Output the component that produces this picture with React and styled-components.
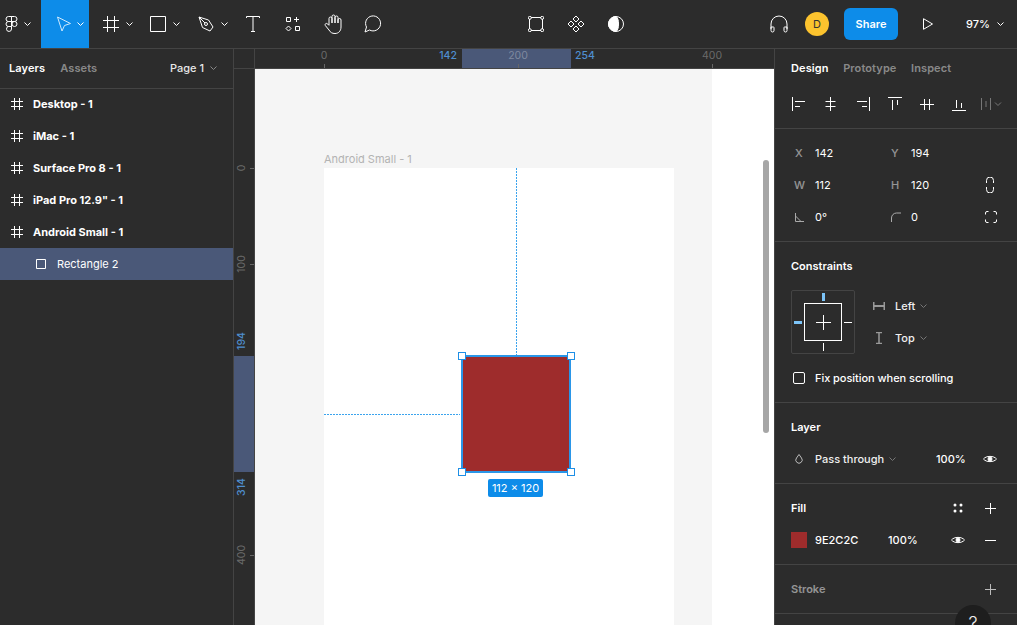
import React from "react";
import styled, { createGlobalStyle } from "styled-components";

const Global = createGlobalStyle`
  html, body { margin: 0; padding: 0; height: 100%; background: #2c2c2c; overflow: hidden; }
  #root { height: 100%; }
  * { box-sizing: border-box; }
`;
const App_ = styled.div`
  width: 1017px; height: 625px; display: grid; grid-template-rows: 49px 1fr;
  font-family: Inter, "Liberation Sans", sans-serif; font-size: 11px; color: #fff;
  background: #2c2c2c; overflow: hidden;
`;
const TopBar = styled.header`display: flex; align-items: stretch; height: 49px; border-bottom: 1px solid #444; background: #2c2c2c;`;
const Tool = styled.div`
  display: flex; align-items: center; justify-content: center; width: ${p => p.$w}px; margin-left: ${p => p.$ml || 0}px;
`;
const MenuTool = styled.div`
  display: flex; align-items: center; gap: ${p => p.$gap ?? 7}px; width: ${p => p.$w}px; padding-left: ${p => p.$pl}px;
  background: ${p => p.$active ? "#0d8ce9" : "transparent"};
`;
const Share = styled.div`
  width: 54px; height: 32px; margin: 8px 0 0 15px; background: #0d8ce9; border-radius: 6px;
  display: flex; align-items: center; justify-content: center; font-weight: 600;
`;
const Avatar = styled.div`
  width: 24px; height: 24px; margin: 12px 0 0 6px; border-radius: 50%; background: #fcc32e; color: #333;
  display: flex; align-items: center; justify-content: center; font-size: 11px;
`;
const Zoom = styled.div`display: flex; align-items: center; gap: 7px; margin-left: 24px; font-weight: 500;`;
const Main = styled.div`display: grid; grid-template-columns: 234px 540px 243px; min-height: 0;`;
const Left = styled.aside`border-right: 1px solid #444; min-height: 0;`;
const LeftTabs = styled.div`
  display: flex; align-items: center; gap: 15px; height: 40px; margin-bottom: -1px; padding: 0 16px 1px 9px; border-bottom: 1px solid #444;
`;
const RightTabs = styled.div`display: flex; align-items: center; gap: 14.5px; height: 39px; padding: 0 16px 1px;`;
const Tab = styled.span`font-weight: 600; color: ${p => p.$on ? "#fff" : "rgba(255,255,255,.45)"}; letter-spacing: .01em;`;
const Page = styled.span`margin-left: auto; display: flex; align-items: center; gap: 6px; font-weight: 500; color: #e8e8e8;`;
const Layer = styled.div`
  display: flex; align-items: center; height: 32px; padding-left: ${p => p.$child ? 35 : 11}px; gap: 10px;
  font-weight: ${p => p.$child ? 400 : 700}; background: ${p => p.$sel ? "#4a5878" : "transparent"};
`;
const Stage = styled.div`display: grid; grid-template-columns: 21px 1fr; grid-template-rows: 20px 1fr; min-height: 0; min-width: 0;`;
const Corner = styled.div`border-right: 1px solid #444; border-bottom: 1px solid #444;`;
const HRuler = styled.div`position: relative; border-bottom: 1px solid #444; overflow: hidden;`;
const VRuler = styled.div`position: relative; border-right: 1px solid #444; overflow: hidden;`;
const HBand = styled.div`position: absolute; left: 207px; top: 0; width: 109px; height: 19px; background: #4a5878;`;
const VBand = styled.div`position: absolute; top: 287px; left: 0; width: 20px; height: 116px; background: #4a5878;`;
const HMark = styled.span`
  position: absolute; top: 0; left: ${p => p.$x}px; transform: translateX(-50%); font-size: 10.5px;
  font-weight: ${p => p.$blue ? 500 : 400}; color: ${p => p.$blue ? "#4f8fd0" : "rgba(255,255,255,.3)"};
`;
const HTick = styled.i`position: absolute; left: ${p => p.$x}px; bottom: 0; width: 1px; height: 4px; background: #666;`;
const VMark = styled.span`
  position: absolute; left: 7px; top: ${p => p.$y}px; transform: translate(-50%,-50%) rotate(-90deg); font-size: 10.5px;
  font-weight: ${p => p.$blue ? 500 : 400}; color: ${p => p.$blue ? "#4f8fd0" : "rgba(255,255,255,.3)"};
`;
const VTick = styled.i`position: absolute; top: ${p => p.$y}px; right: 0; height: 1px; width: 4px; background: #666;`;
const Canvas = styled.div`position: relative; background: linear-gradient(90deg, #f5f5f5 457px, #fff 457px); overflow: hidden;`;
const FrameLabel = styled.div`position: absolute; left: 69px; top: 83px; color: #b3b3b3;`;
const Frame = styled.div`position: absolute; left: 69px; top: 99px; width: 350px; height: 470px; background: #fff;`;
const VGuide = styled.div`
  position: absolute; left: 192px; top: 0; width: 1px; height: 187px;
  background: repeating-linear-gradient(180deg, #3ba4ee 0 2px, transparent 2px 3px);
`;
const HGuide = styled.div`
  position: absolute; left: 0; top: 246px; width: 136px; height: 1px;
  background: repeating-linear-gradient(90deg, #3ba4ee 0 2px, transparent 2px 3px);
`;
const Rect = styled.div`position: absolute; left: 137px; top: 187px; width: 110px; height: 118px; background: #9e2c2c; border: 2px solid #2a96e8;`;
const Handle = styled.i`
  position: absolute; width: 8px; height: 8px; background: #fff; border: 1px solid #1e8fe6;
  ${p => p.$t ? "top: -5px;" : "bottom: -5px;"} ${p => p.$l ? "left: -5px;" : "right: -6px;"}
`;
const Badge = styled.div`
  position: absolute; left: 233px; top: 410px; width: 55px; height: 18px; background: #0d8ce9; border-radius: 2px;
  display: flex; align-items: center; justify-content: center; color: #fff; font-size: 11px;
`;
const Scroll = styled.div`position: absolute; left: 508px; top: 91px; width: 6px; height: 273px; border-radius: 3px; background: #a6a6a6;`;
const Right = styled.aside`position: relative; border-left: 1px solid #444; min-height: 0; overflow: hidden;`;
const Align = styled.div`display: flex; align-items: center; height: 41px; padding: 0 0 9px 17px; gap: 18px; border-bottom: 1px solid #444;`;
const AlignMore = styled.span`margin-left: -3px;`;
const Section = styled.section`padding: 8px 0; border-bottom: 1px solid #444;`;
const Title = styled.div`
  display: flex; align-items: center; justify-content: space-between; height: 32px; padding: 0 21px 0 16px; font-weight: 600;
  color: ${p => p.$dim ? "rgba(255,255,255,.5)" : "#fff"};
`;
const Actions = styled.div`display: flex; align-items: center; gap: 22px;`;
const PropRow = styled.div`display: grid; grid-template-columns: 24px 72px 24px 72px 1fr; align-items: center; height: 32px; padding-left: 16px;`;
const PropLabel = styled.span`font-weight: 500; color: rgba(255,255,255,.5); padding-left: ${p => p.$pl ?? 4}px;`;
const End = styled.span`display: flex; justify-content: flex-end; padding-right: ${p => p.$pr}px;`;
const ConstraintBody = styled.div`display: flex; margin-top: 8px; padding-left: 16px; gap: 18px;`;
const Widget = styled.div`
  position: relative; width: 64px; height: 64px; border: 1px solid #444; border-radius: 2px;
  display: flex; align-items: center; justify-content: center;
`;
const Inner = styled.div`width: 38px; height: 38px; border: 1px solid #fff; display: flex; align-items: center; justify-content: center;`;
const Peg = styled.i`
  position: absolute; background: ${p => p.$on ? "#7cc4f8" : "#fff"};
  ${p => p.$side === "t" && `top: 2px; left: 30px; width: 3px; height: 8px;`}
  ${p => p.$side === "b" && `bottom: 2px; left: 31px; width: 1px; height: 8px;`}
  ${p => p.$side === "l" && `left: 2px; top: 30px; height: 3px; width: 8px;`}
  ${p => p.$side === "r" && `right: 2px; top: 31px; height: 1px; width: 8px;`}
`;
const ConstraintCol = styled.div`display: flex; flex-direction: column;`;
const ConstraintRow = styled.div`display: flex; align-items: center; height: 32px; gap: 10px;`;
const Select = styled.span`display: flex; align-items: center; gap: 5px; font-weight: 500; color: #f0f0f0;`;
const CheckRow = styled.div`display: flex; align-items: center; height: 32px; margin-top: 8px; padding-left: 18px; gap: 10px; font-weight: 500; letter-spacing: -.05px;`;
const Check = styled.i`width: 12px; height: 12px; border: 1px solid #fff; border-radius: 2px;`;
const LayerRow = styled.div`display: grid; grid-template-columns: 24px 121px 30px 1fr; align-items: center; height: 32px; padding-left: 16px; font-weight: 500;`;
const FillRow = styled.div`display: grid; grid-template-columns: 24px 73px 30px 1fr; align-items: center; height: 32px; padding-left: 16px; font-weight: 500;`;
const Swatch = styled.i`display: block; width: 16px; height: 16px; background: #9e2c2c;`;
const Pair = styled.span`display: flex; align-items: center; justify-content: flex-end; gap: 20px; padding-right: 21px;`;
const Help = styled.div`
  position: absolute; left: 180px; top: 556px; width: 36px; height: 36px; border-radius: 50%; background: #1e1e1e;
  display: flex; align-items: center; justify-content: center; font-size: 18px; font-weight: 300; color: #eee;
`;
const Svg = styled.svg`display: block; flex: none; fill: none; stroke: ${p => p.$c || "#fff"}; stroke-width: 1;`;

const I = ({ s = 16, w, h, c, children }) => <Svg width={w || s} height={h || s} viewBox={`0 0 ${w || s} ${h || s}`} $c={c}>{children}</Svg>;
const Chev = ({ c = "#fff" }) => <I w={7} h={4} c={c}><path d="M.5.5 3.500 3.500 6.500.5" /></I>;
const Grid = () => <I s={12}><path d="M3.500 0v12M8.500 0v12M0 3.500h12M0 8.500h12" /></I>;
const Eye = () => <I w={14} h={10}><path d="M.5 5C3 1.500 11 1.500 13.500 5 11 8.500 3 8.500.5 5Z" /><circle cx="7" cy="5" r="2" fill="#fff" /></I>;

const LAYERS = ["Desktop - 1", "iMac - 1", "Surface Pro 8 - 1", 'iPad Pro 12.9" - 1', "Android Small - 1"];
const ALIGN = [
  "M.5 0v14M3 4.500h10M3 9.500h5", "M6.500 0v14M1.500 4.500h10M1.500 9.500h10", "M13.500 0v14M1 4.500h10M6 9.500h5",
  "M0 .5h14M4.500 3v10M9.500 3v5", "M0 7.500h14M4.500 2v11M9.500 2v11", "M0 13.500h14M4.500 3v8M9.500 6v5",
];

export default function App() {
  return (
    <App_>
      <Global />
      <TopBar>
        <MenuTool $w={41} $pl={5} $gap={6}>
          <I w={13} h={16}>
            <path d="M6.500.5H3.500a2.500 2.500 0 0 0 0 5h3ZM6.500.5h3a2.500 2.500 0 0 1 0 5h-3ZM6.500 5.500h-3a2.500 2.500 0 0 0 0 5h3ZM6.500 10.500h-3a2.500 2.500 0 1 0 3 2.500Z" />
            <circle cx="9.500" cy="8" r="2.500" />
          </I>
          <Chev />
        </MenuTool>
        <MenuTool $w={48} $active $pl={15} $gap={5}>
          <I s={16} c="#cfe9fc"><path d="M1.500 1 14.500 7.500 8.500 9.500 6 15Z" /></I>
          <Chev />
        </MenuTool>
        <MenuTool $w={48} $pl={14}><I><path d="M4.500 0v16M11.500 0v16M0 4.500h16M0 11.500h16" /></I><Chev /></MenuTool>
        <MenuTool $w={48} $pl={13}><I><path d="M.5.5h15v15H.5z" /></I><Chev /></MenuTool>
        <MenuTool $w={48} $pl={13}>
          <I>
            <path d="M1 1l9.500 3 4.500 7-3 4-7.500-3.500Z M1 1l6 6" />
            <circle cx="8" cy="8" r="1.500" />
          </I>
          <Chev />
        </MenuTool>
        <Tool $w={40}><I w={14} h={16}><path d="M.5 2V.5h13V2M7 .5v15M5 15.500h4" /></I></Tool>
        <Tool $w={40}>
          <I><path d="M1.500 1.500h4v4h-4zM11.500 1v5M9 3.500h5M10.500 10.500h4v4h-4zM3.500 10l2.500 2.500L3.500 15 1 12.500Z" /></I>
        </Tool>
        <Tool $w={39}>
          <I w={18} h={20}>
            <path d="M5 11V4.500a1.500 1.500 0 0 1 3 0V9M8 9V2.500a1.500 1.500 0 0 1 3 0V9M11 9V3.500a1.500 1.500 0 0 1 3 0V9M14 9V6a1.500 1.500 0 0 1 3 0v7c0 4-2.500 6.500-6 6.500-3 0-4.500-1-6-3.500L1.300 11.500c-.8-1.500 1-2.800 2.200-1.700L5 11.500" />
          </I>
        </Tool>
        <Tool $w={41}>
          <I w={18} h={18}><path d="M1 17l1.500-5a7.500 7.500 0 1 1 3 3Z" /></I>
        </Tool>
        <Tool $w={40} $ml={123}>
          <I>
            <path d="M3 1.500h10M3 14.500h10M1.500 3v10M14.500 3v10" />
            <circle cx="1.800" cy="1.800" r="1.500" /><circle cx="14.200" cy="1.800" r="1.500" /><circle cx="1.800" cy="14.200" r="1.500" /><circle cx="14.200" cy="14.200" r="1.500" />
          </I>
        </Tool>
        <Tool $w={40}>
          <I w={18} h={18}>
            <path d="M9 1l3 3-3 3-3-3ZM4 6l3 3-3 3-3-3ZM14 6l3 3-3 3-3-3ZM9 11l3 3-3 3-3-3Z" />
          </I>
        </Tool>
        <Tool $w={40}>
          <I><circle cx="8" cy="8" r="7.500" /><path d="M8 .5a7.500 7.500 0 0 0 0 15c2-1.500 2.500-4 2.500-7.500S10 2 8 .5Z" fill="#fff" /></I>
        </Tool>
        <Tool $w={40} $ml={123}>
          <I w={18} h={18}>
            <path d="M1 14V9a8 8 0 0 1 16 0v5M1 12h2.500a.5.500 0 0 1 .5.5v3a1.500 1.500 0 0 1-3 0ZM17 12h-2.500a.5.500 0 0 0-.5.5v3a1.500 1.500 0 0 0 3 0Z" />
          </I>
        </Tool>
        <Avatar>D</Avatar>
        <Share>Share</Share>
        <Tool $w={28} $ml={16}><I w={10} h={12}><path d="M.5.7v10.600L9.500 6Z" /></I></Tool>
        <Zoom>97% <Chev /></Zoom>
      </TopBar>
      <Main>
        <Left>
          <LeftTabs>
            <Tab $on>Layers</Tab><Tab>Assets</Tab>
            <Page>Page 1 <Chev c="#888" /></Page>
          </LeftTabs>
          {LAYERS.map(n => <Layer key={n}><Grid />{n}</Layer>)}
          <Layer $child $sel>
            <I s={12}><path d="M1.500 1.500h9v9h-9z" /></I>Rectangle 2
          </Layer>
        </Left>
        <Stage>
          <Corner />
          <HRuler>
            <HBand />
            <HMark $x={69}>0</HMark><HTick $x={69} />
            <HMark $x={193} $blue>142</HMark>
            <HMark $x={263}>200</HMark><HTick $x={263} />
            <HMark $x={330} $blue>254</HMark>
            <HMark $x={457}>400</HMark><HTick $x={457} />
          </HRuler>
          <VRuler>
            <VBand />
            <VMark $y={99}>0</VMark><VTick $y={99} />
            <VMark $y={195}>100</VMark><VTick $y={195} />
            <VMark $y={272} $blue>194</VMark>
            <VMark $y={418} $blue>314</VMark>
            <VMark $y={486}>400</VMark><VTick $y={486} />
          </VRuler>
          <Canvas>
            <FrameLabel>Android Small - 1</FrameLabel>
            <Frame>
              <VGuide />
              <HGuide />
              <Rect>
                <Handle $t $l /><Handle $t /><Handle $l /><Handle />
              </Rect>
            </Frame>
            <Badge>112 × 120</Badge>
            <Scroll />
          </Canvas>
        </Stage>
        <Right>
          <RightTabs>
            <Tab $on>Design</Tab><Tab>Prototype</Tab><Tab>Inspect</Tab>
          </RightTabs>
          <Align>
            {ALIGN.map(d => <I key={d} s={14}><path d={d} /></I>)}
            <AlignMore><I w={22} h={14} c="#777"><path d="M.5 1v12M5 4v6M9.500 1v12M14 5.500 17 8.500 20 5.500" /></I></AlignMore>
          </Align>
          <Section>
            <PropRow>
              <PropLabel>X</PropLabel><span>142</span><PropLabel>Y</PropLabel><span>194</span>
            </PropRow>
            <PropRow>
              <PropLabel $pl={3}>W</PropLabel><span>112</span><PropLabel>H</PropLabel><span>120</span>
              <End $pr={23}><I w={8} h={16}><path d="M.5 6V3.500a3.500 3.500 0 0 1 7 0V6M.5 10v2.500a3.500 3.500 0 0 0 7 0V10" /></I></End>
            </PropRow>
            <PropRow>
              <PropLabel><I w={9} h={9} c="#aaa"><path d="M.5 0v8.500H9M.5 3 6 8.500" /></I></PropLabel>
              <span>0°</span>
              <PropLabel><I w={10} h={10} c="#aaa"><path d="M.5 10V6a5 5 0 0 1 5-5H10" /></I></PropLabel>
              <span>0</span>
              <End $pr={20}><I s={12}><path d="M.5 3.500V2A1.500 1.500 0 0 1 2 .5h1.500M8.500.5H10A1.500 1.500 0 0 1 11.500 2v1.500M11.500 8.500V10A1.500 1.500 0 0 1 10 11.500H8.500M3.500 11.500H2A1.500 1.500 0 0 1 .5 10V8.500" /></I></End>
            </PropRow>
          </Section>
          <Section>
            <Title>Constraints</Title>
            <ConstraintBody>
              <Widget>
                <Inner><I s={15}><path d="M7.500 0v15M0 7.500h15" /></I></Inner>
                <Peg $side="t" $on /><Peg $side="b" /><Peg $side="l" $on /><Peg $side="r" />
              </Widget>
              <ConstraintCol>
                <ConstraintRow>
                  <I w={12} h={8} c="#999"><path d="M.5 0v8M11.500 0v8M1 4h10" strokeWidth="2" /></I>
                  <Select>Left <Chev c="#777" /></Select>
                </ConstraintRow>
                <ConstraintRow>
                  <I w={12} h={12} c="#999"><path d="M3 .5h6M3 11.500h6M6 1v10" strokeWidth="1.500" /></I>
                  <Select>Top <Chev c="#777" /></Select>
                </ConstraintRow>
              </ConstraintCol>
            </ConstraintBody>
            <CheckRow><Check />Fix position when scrolling</CheckRow>
          </Section>
          <Section>
            <Title>Layer</Title>
            <LayerRow>
              <PropLabel><I w={8} h={10} c="#bbb"><path d="M4 .5 6.500 4a3.200 3.200 0 1 1-5 0Z" /></I></PropLabel>
              <Select>Pass through <Chev c="#777" /></Select>
              <span>100%</span>
              <End $pr={20}><Eye /></End>
            </LayerRow>
          </Section>
          <Section>
            <Title>
              Fill
              <Actions>
                <I w={10} h={10}><g fill="#fff" stroke="none"><circle cx="2" cy="2" r="1.500" /><circle cx="8" cy="2" r="1.500" /><circle cx="2" cy="8" r="1.500" /><circle cx="8" cy="8" r="1.500" /></g></I>
                <I s={11}><path d="M5.500 0v11M0 5.500h11" /></I>
              </Actions>
            </Title>
            <FillRow>
              <Swatch /><span>9E2C2C</span><span>100%</span>
              <Pair>
                <Eye />
                <I w={11} h={1}><path d="M0 .5h11" /></I>
              </Pair>
            </FillRow>
          </Section>
          <Section>
            <Title $dim>Stroke<I s={11} c="#bbb"><path d="M5.500 0v11M0 5.500h11" /></I></Title>
          </Section>
          <Help>?</Help>
        </Right>
      </Main>
    </App_>
  );
}
